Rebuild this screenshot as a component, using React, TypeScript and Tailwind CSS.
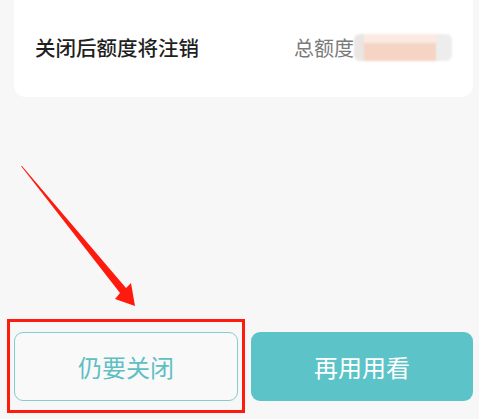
import React from "react";

export default function App() {
  return (
    <div
      className="relative h-[419px] w-[479px] overflow-hidden bg-[#f7f7f7]"
      style={{ fontFamily: '"Noto Sans CJK SC", "Noto Sans", sans-serif' }}
    >
      <div className="ml-[14px] mr-[6px] flex h-[97px] items-center justify-between rounded-b-[12px] bg-white pl-[21px] pr-[21px]">
        <span className="mb-[2px] text-[20.5px] font-medium leading-none text-[#1f1f1f]">关闭后额度将注销</span>
        <div className="mb-[2px] flex items-center">
          <span className="text-[20px] leading-none text-[#7a7a7a]">总额度</span>
          <div className="flex h-[27px] w-[98px] overflow-hidden rounded-[6px] blur-[1px]">
            <div className="w-[10px] bg-[#e9e6e4]" />
            <div className="flex flex-1 flex-col">
              <div className="h-[9px] bg-[#fbeae2]" />
              <div className="flex-1 bg-[#f5d4c4]" />
            </div>
            <div className="w-[16px] bg-[#ededed]" />
          </div>
        </div>
      </div>

      <div className="ml-[14px] mr-[6px] mt-[235px] flex gap-[13px]">
        <button className="flex h-[69px] flex-1 items-center justify-center rounded-[9px] border border-[#82cdd0] bg-[#f9f9f9] text-[24px] text-[#5ebfc4]">
          仍要关闭
        </button>
        <button className="flex h-[69px] flex-1 items-center justify-center rounded-[9px] bg-[#5cc4c8] text-[24px] text-white">
          再用用看
        </button>
      </div>

      <div className="absolute left-[7px] top-[319px] h-[94px] w-[238px] border-[3px] border-[#ff1a0e]" />

      <svg className="absolute left-0 top-0" width="479" height="419" viewBox="0 0 479 419">
        <polygon points="21,166 22,166 126,288 131,283 135,306 115,299 120,293" fill="#ff1a0e" />
      </svg>
    </div>
  );
}
